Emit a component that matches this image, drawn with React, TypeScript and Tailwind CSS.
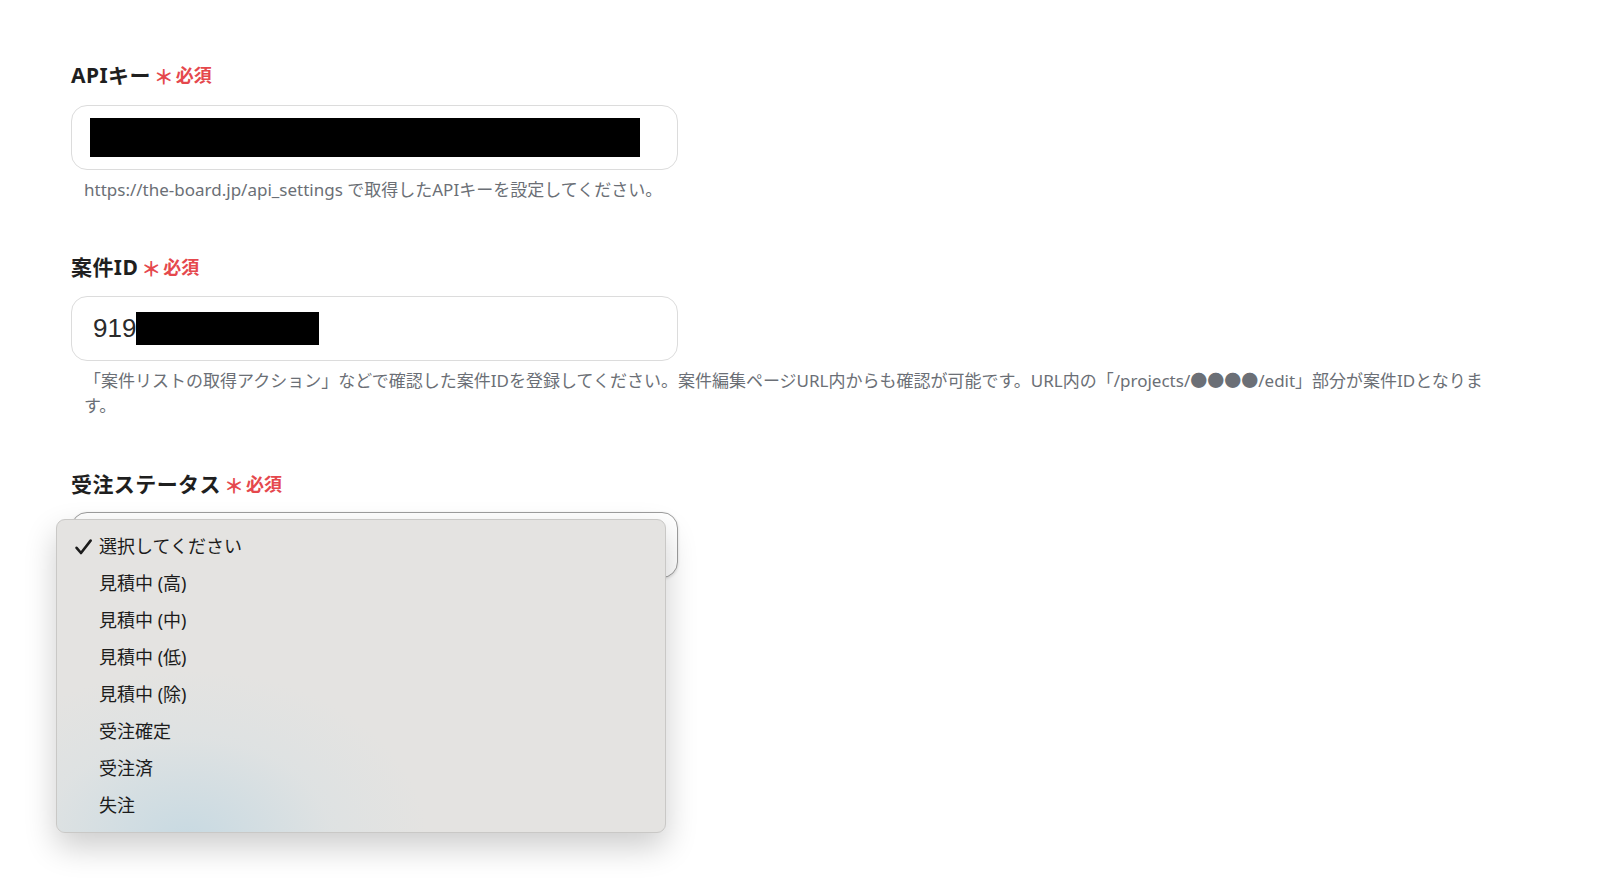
import React from 'react';

const FONT = "font-['Noto_Sans','Noto_Sans_CJK_JP',sans-serif]";

function Label({ text }: { text: string }) {
  return (
    <div className="flex items-center h-[30px]">
      <span className="text-[21px] font-bold text-[#1f1f1f] leading-[30px] tracking-[0.02em]">{text}</span>
      <span className="ml-[3px] text-[20px] font-bold leading-none text-[#e5484d] translate-y-[3px]">＊</span>
      <span className="ml-[2px] text-[18px] font-bold leading-[30px] text-[#e5484d]">必須</span>
    </div>
  );
}

const OPTIONS = [
  '選択してください',
  '見積中 (高)',
  '見積中 (中)',
  '見積中 (低)',
  '見積中 (除)',
  '受注確定',
  '受注済',
  '失注',
];

export default function App() {
  return (
    <div className={`min-h-screen w-full bg-white ${FONT} pl-[71px] pt-[60px]`}>
      <div className="w-[1456px]">
        {/* APIキー */}
        <Label text="APIキー" />
        <div className="mt-[15px] w-[607px] h-[65px] rounded-[16px] border border-[#dcdcdc] bg-white flex items-center pl-[18px]">
          <div className="w-[550px] h-[39px] bg-black" />
        </div>
        <p className="pl-[13px] mt-[7px] text-[17px] leading-[25px] text-[#6b6f76]">
          https://the-board.jp/api_settings で取得したAPIキーを設定してください。
        </p>

        {/* 案件ID */}
        <div className="mt-[50px]">
          <Label text="案件ID" />
        </div>
        <div className="mt-[14px] w-[607px] h-[65px] rounded-[16px] border border-[#dcdcdc] bg-white flex items-center pl-[21px]">
          <span className="text-[26px] text-[#2a2a2a] font-['Liberation_Sans',sans-serif]">919</span>
          <div className="w-[183px] h-[33px] bg-black" />
        </div>
        <p className="pl-[13px] pr-[12px] mt-[7px] text-[17px] leading-[25px] text-[#6b6f76]">
          「案件リストの取得アクション」などで確認した案件IDを登録してください。案件編集ページURL内からも確認が可能です。URL内の「/projects/●●●●/edit」部分が案件IDとなります。
        </p>

        {/* 受注ステータス */}
        <div className="mt-[51px]">
          <Label text="受注ステータス" />
        </div>
        <div className="relative mt-[13px] w-[607px]">
          <div className="h-[66px] rounded-[16px] border border-[#9d9d9d] bg-white shadow-[0_1px_3px_rgba(0,0,0,0.15)]" />

          {/* open dropdown */}
          <div className="absolute left-[-15px] top-[7px] w-[610px] rounded-[9px] border border-[#c9c8c6] bg-[#e4e3e1] shadow-[0_14px_32px_rgba(0,0,0,0.2)] overflow-hidden py-[8px]">
            <div className="pointer-events-none absolute inset-0 bg-[radial-gradient(240px_170px_at_130px_320px,rgba(198,217,226,0.95),rgba(214,224,228,0.4)_60%,transparent_100%)]" />
            <ul className="relative">
              {OPTIONS.map((opt, i) => (
                <li key={opt} className="h-[37px] flex items-center text-[18px] text-[#1c1c1c]">
                  <span className="w-[42px] flex justify-end pr-[7px]">
                    {i === 0 && (
                      <svg width="17" height="16" viewBox="0 0 17 16" fill="none">
                        <path d="M1.6 8.8 L6 14 L15.6 1.6" stroke="#1c1c1c" strokeWidth="2.6" strokeLinecap="round" strokeLinejoin="round" />
                      </svg>
                    )}
                  </span>
                  <span>{opt}</span>
                </li>
              ))}
            </ul>
          </div>
        </div>
      </div>
    </div>
  );
}
